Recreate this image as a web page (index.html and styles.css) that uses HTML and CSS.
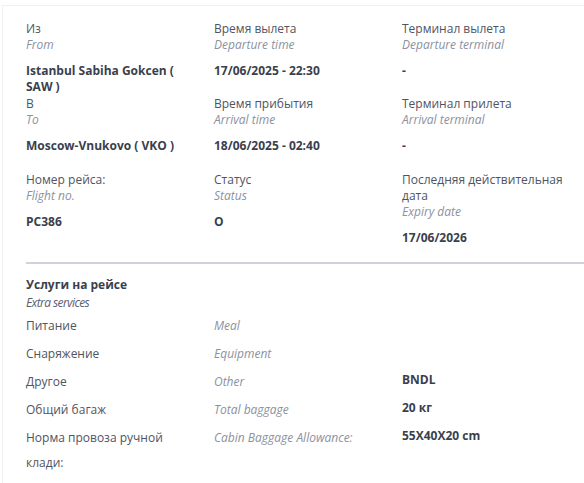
FILE: index.html
```html
<!DOCTYPE html>
<html lang="ru">
<head>
<meta charset="utf-8">
<link rel="stylesheet" href="styles.css">
</head>
<body>
<div class="card">
  <div class="grid">
    <div class="cell">
      <div class="lbl">Из</div>
      <div class="en">From</div>
      <div class="val">Istanbul Sabiha Gokcen ( SAW )</div>
    </div>
    <div class="cell">
      <div class="lbl">Время вылета</div>
      <div class="en">Departure time</div>
      <div class="val">17/06/2025 - 22:30</div>
    </div>
    <div class="cell">
      <div class="lbl">Терминал вылета</div>
      <div class="en">Departure terminal</div>
      <div class="val">-</div>
    </div>
    <div class="cell">
      <div class="lbl">В</div>
      <div class="en">To</div>
      <div class="val">Moscow-Vnukovo ( VKO )</div>
    </div>
    <div class="cell">
      <div class="lbl">Время прибытия</div>
      <div class="en">Arrival time</div>
      <div class="val">18/06/2025 - 02:40</div>
    </div>
    <div class="cell">
      <div class="lbl">Терминал прилета</div>
      <div class="en">Arrival terminal</div>
      <div class="val">-</div>
    </div>
    <div class="cell">
      <div class="lbl">Номер рейса:</div>
      <div class="en">Flight no.</div>
      <div class="val">PC386</div>
    </div>
    <div class="cell">
      <div class="lbl">Статус</div>
      <div class="en">Status</div>
      <div class="val">O</div>
    </div>
    <div class="cell">
      <div class="lbl">Последняя действительная дата</div>
      <div class="en">Expiry date</div>
      <div class="val">17/06/2026</div>
    </div>
  </div>
  <div class="divider"></div>
  <div class="services">
    <div class="svc-title">Услуги на рейсе</div>
    <div class="svc-sub">Extra services</div>
    <div class="svc-rows">
      <div class="srow"><div class="lbl">Питание</div><div class="en">Meal</div><div class="val"></div></div>
      <div class="srow"><div class="lbl">Снаряжение</div><div class="en">Equipment</div><div class="val"></div></div>
      <div class="srow"><div class="lbl">Другое</div><div class="en">Other</div><div class="val">BNDL</div></div>
      <div class="srow"><div class="lbl">Общий багаж</div><div class="en">Total baggage</div><div class="val">20 кг</div></div>
      <div class="srow"><div class="lbl">Норма провоза ручной клади:</div><div class="en">Cabin Baggage Allowance:</div><div class="val">55X40X20 cm</div></div>
    </div>
  </div>
</div>
</body>
</html>
```
FILE: styles.css
```css
html, body {
  margin: 0;
  padding: 0;
  background: #ffffff;
}
body {
  font-family: "Open Sans", "Liberation Sans", sans-serif;
  font-size: 12px;
  line-height: 16px;
  color: #4d5260;
  padding: 5px 0 0 2px;
}
.card {
  border-top: 1px solid #eef0f3;
  border-left: 1px solid #eef0f3;
  padding: 15px 0 0 23px;
  min-height: 480px;
}
.grid {
  display: grid;
  grid-template-columns: 188px 188px 1fr;
  grid-template-rows: 75px 76px auto;
}
.lbl {
  color: #4f5462;
}
.en {
  color: #8c91a0;
  font-style: italic;
}
.val {
  margin-top: 10px;
  font-weight: 700;
  color: #3a3f4d;
  padding-right: 30px;
}
.divider {
  margin-top: 16px;
  height: 2px;
  background: #cfd1dc;
}
.services {
  padding-top: 13px;
}
.svc-title {
  font-weight: 700;
  color: #3a3f4d;
}
.svc-sub {
  font-style: italic;
  color: #5b6070;
  letter-spacing: -0.6px;
  margin-top: 2px;
}
.svc-rows {
  margin-top: 1px;
}
.srow {
  display: grid;
  grid-template-columns: 188px 188px 1fr;
  min-height: 28px;
  align-items: start;
}
.srow .lbl {
  padding-right: 30px;
  line-height: 25px;
  margin-top: 1px;
}
.srow .en {
  line-height: 25px;
  margin-top: 1px;
}
.srow .val {
  margin-top: 4px;
  padding: 0;
}
```
